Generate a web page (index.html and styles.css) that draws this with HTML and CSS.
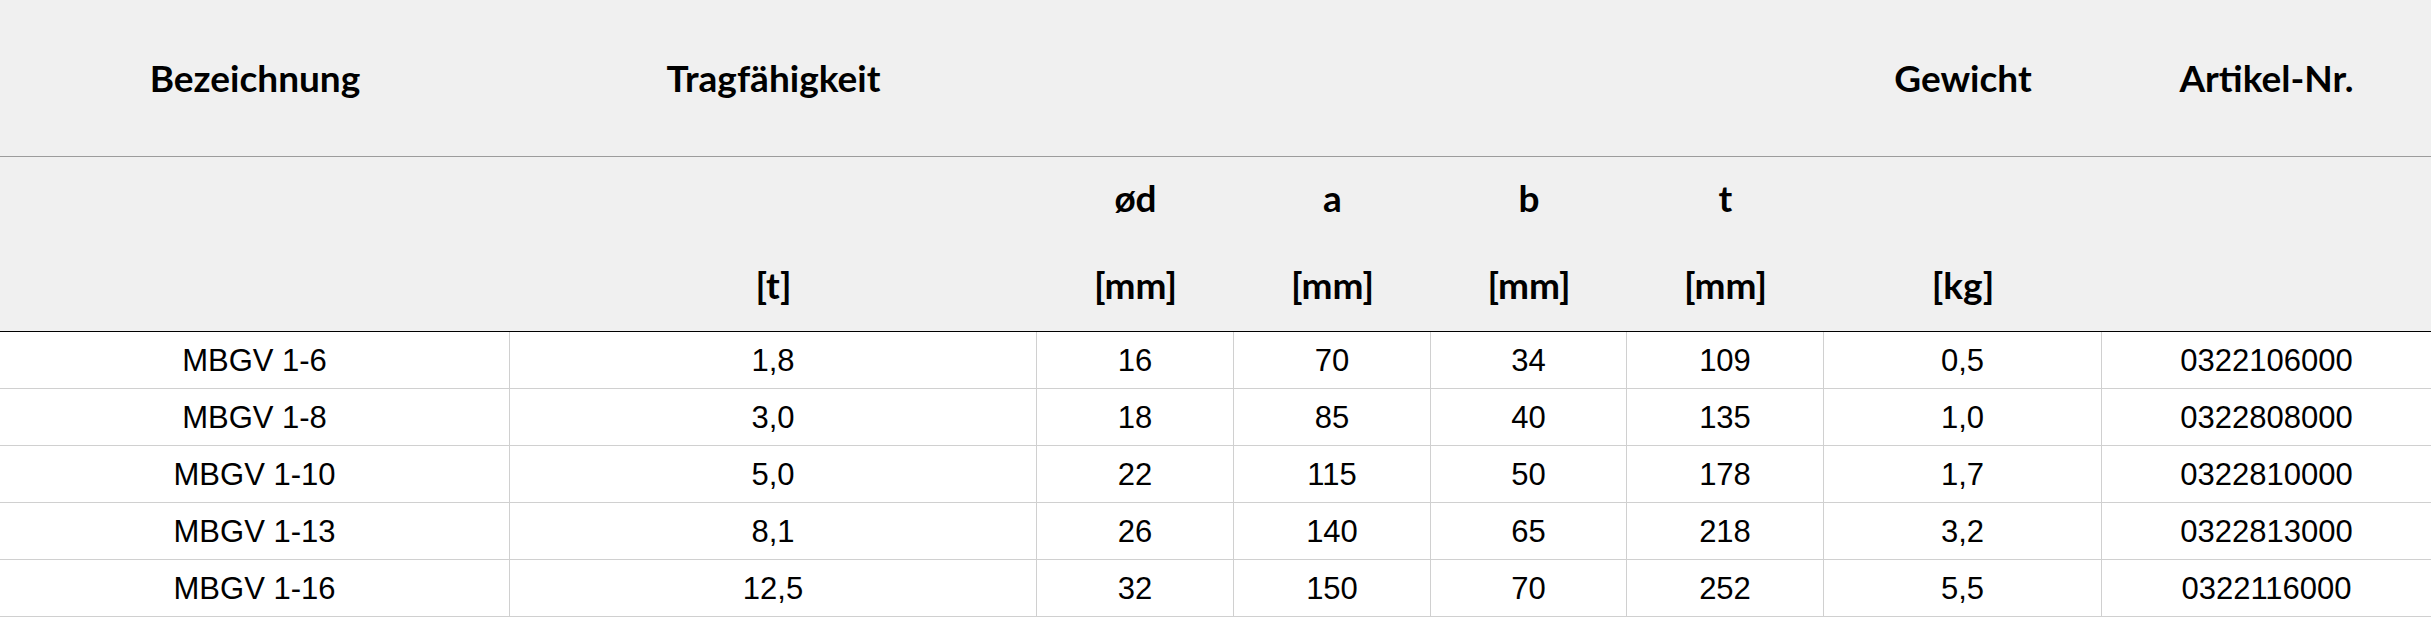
FILE: index.html
```html
<!DOCTYPE html>
<html lang="de">
<head>
<meta charset="utf-8">
<title>MBGV</title>
<link rel="stylesheet" href="styles.css">
</head>
<body>
<div class="spec-table">
  <div class="hcell h1">Bezeichnung</div>
  <div class="hcell h1">Tragfähigkeit</div>
  <div class="hcell h1"></div>
  <div class="hcell h1"></div>
  <div class="hcell h1"></div>
  <div class="hcell h1"></div>
  <div class="hcell h1">Gewicht</div>
  <div class="hcell h1">Artikel-Nr.</div>

  <div class="hcell h2"><span class="hl"></span><span class="hl"></span></div>
  <div class="hcell h2"><span class="hl"></span><span class="hl">[t]</span></div>
  <div class="hcell h2"><span class="hl">ød</span><span class="hl">[mm]</span></div>
  <div class="hcell h2"><span class="hl">a</span><span class="hl">[mm]</span></div>
  <div class="hcell h2"><span class="hl">b</span><span class="hl">[mm]</span></div>
  <div class="hcell h2"><span class="hl">t</span><span class="hl">[mm]</span></div>
  <div class="hcell h2"><span class="hl"></span><span class="hl">[kg]</span></div>
  <div class="hcell h2"><span class="hl"></span><span class="hl"></span></div>

  <div class="cell">MBGV 1-6</div><div class="cell">1,8</div><div class="cell">16</div><div class="cell">70</div><div class="cell">34</div><div class="cell">109</div><div class="cell">0,5</div><div class="cell last">0322106000</div>
  <div class="cell">MBGV 1-8</div><div class="cell">3,0</div><div class="cell">18</div><div class="cell">85</div><div class="cell">40</div><div class="cell">135</div><div class="cell">1,0</div><div class="cell last">0322808000</div>
  <div class="cell">MBGV 1-10</div><div class="cell">5,0</div><div class="cell">22</div><div class="cell">115</div><div class="cell">50</div><div class="cell">178</div><div class="cell">1,7</div><div class="cell last">0322810000</div>
  <div class="cell">MBGV 1-13</div><div class="cell">8,1</div><div class="cell">26</div><div class="cell">140</div><div class="cell">65</div><div class="cell">218</div><div class="cell">3,2</div><div class="cell last">0322813000</div>
  <div class="cell">MBGV 1-16</div><div class="cell">12,5</div><div class="cell">32</div><div class="cell">150</div><div class="cell">70</div><div class="cell">252</div><div class="cell">5,5</div><div class="cell last">0322116000</div>
</div>
</body>
</html>
```
FILE: styles.css
```css
html, body {
  margin: 0;
  padding: 0;
  background: #ffffff;
}

.spec-table {
  display: grid;
  grid-template-columns: 510px 527px 197px 197px 196px 197px 278px 329px;
  width: 2431px;
  color: #000000;
}

.hcell {
  box-sizing: border-box;
  background: #f0f0f0;
  font-family: Lato, "Open Sans", sans-serif;
  font-weight: 700;
  font-size: 37px;
  display: flex;
  align-items: center;
  justify-content: center;
  text-align: center;
}

.h1 {
  height: 157px;
  border-bottom: 1px solid #9c9c9c;
  padding-bottom: 2px;
}

.h2 {
  height: 175px;
  border-bottom: 1px solid #000000;
  flex-direction: column;
  gap: 43px;
  padding-bottom: 6px;
}

.hl {
  display: block;
  height: 44px;
  line-height: 44px;
}

.cell {
  box-sizing: border-box;
  height: 57px;
  border-bottom: 1px solid #d0d0d0;
  border-right: 1px solid #d0d0d0;
  font-family: "Liberation Sans", Arial, sans-serif;
  font-size: 31px;
  display: flex;
  align-items: center;
  justify-content: center;
  padding-top: 2px;
}

.cell.last {
  border-right: none;
}
```
